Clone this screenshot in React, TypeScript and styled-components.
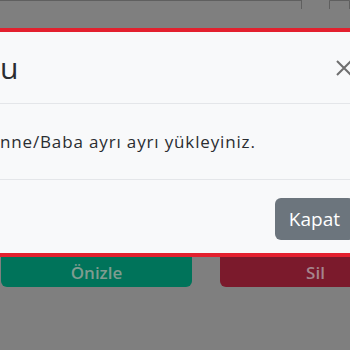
import React from "react";
import styled, { createGlobalStyle } from "styled-components";

const GlobalStyle = createGlobalStyle`
  html, body {
    margin: 0;
    padding: 0;
    overflow: hidden;
    background: #7f7f7f;
    font-family: "Open Sans", "Noto Sans", sans-serif;
  }
`;

const Page = styled.div`
  position: relative;
  width: 350px;
  height: 350px;
  overflow: hidden;
`;

const InputRow = styled.div`
  display: grid;
  grid-template-columns: 302px 1fr;
  gap: 27px;
  height: 9px;
  overflow: hidden;
  align-items: end;
`;

const InputBox = styled.div<{ $first?: boolean }>`
  height: 40px;
  border: 1px solid #5f5f5f;
  border-left: ${(p) => (p.$first ? "none" : "1px solid #5f5f5f")};
  border-radius: 0 0 4px 4px;
`;

const ButtonRow = styled.div`
  display: grid;
  grid-template-columns: 191px 191px;
  gap: 28px;
  margin-top: 238px;
  padding-left: 1px;
`;

const PageButton = styled.div<{ $bg: string; $color: string }>`
  height: 40px;
  box-sizing: border-box;
  padding-top: 10px;
  border-radius: 6px;
  background: ${(p) => p.$bg};
  color: ${(p) => p.$color};
  font-size: 17px;
  font-weight: 600;
  display: flex;
  align-items: center;
  justify-content: center;
`;

const Modal = styled.div`
  position: absolute;
  top: 28px;
  left: 0;
  width: 370px;
  background: #f8f9fa;
  border-top: 4px solid #e3202e;
  border-bottom: 4px solid #e3202e;
  color: #212529;
`;

const Header = styled.div`
  height: 71px;
  border-bottom: 1px solid #e4e6e9;
  display: flex;
  align-items: center;
  justify-content: space-between;
  padding-right: 18px;
`;

const Title = styled.h5`
  margin: 0;
  font-size: 30px;
  font-weight: 400;
  line-height: 1;
  color: #2a2d31;
`;

const CloseButton = styled.button`
  border: none;
  background: transparent;
  padding: 0;
  width: 16px;
  height: 16px;
  display: flex;
`;

const Body = styled.div`
  height: 75px;
  border-bottom: 1px solid #e4e6e9;
  display: flex;
  align-items: center;
  font-size: 17px;
  letter-spacing: 0.85px;
  color: #2a2d31;
`;

const Footer = styled.div`
  height: 73px;
  box-sizing: border-box;
  padding: 18px 16px 0 0;
  display: flex;
  justify-content: flex-end;
  align-items: flex-start;
`;

const CloseAction = styled.button`
  height: 42px;
  padding: 0 14px;
  border: none;
  border-radius: 6px;
  background: #6c757d;
  color: #ffffff;
  font-family: inherit;
  font-size: 19px;
`;

export default function App() {
  return (
    <Page>
      <GlobalStyle />
      <InputRow>
        <InputBox $first />
        <InputBox />
      </InputRow>
      <ButtonRow>
        <PageButton $bg="#00735a" $color="#7f9c90">
          Önizle
        </PageButton>
        <PageButton $bg="#7b1a2c" $color="#a5858c">
          Sil
        </PageButton>
      </ButtonRow>
      <Modal>
        <Header>
          <Title>u</Title>
          <CloseButton aria-label="Kapat">
            <svg width="16" height="16" viewBox="0 0 16 16">
              <path d="M1 1L15 15M15 1L1 15" stroke="#6f6f6f" strokeWidth="2" />
            </svg>
          </CloseButton>
        </Header>
        <Body>nne/Baba ayrı ayrı yükleyiniz.</Body>
        <Footer>
          <CloseAction>Kapat</CloseAction>
        </Footer>
      </Modal>
    </Page>
  );
}
